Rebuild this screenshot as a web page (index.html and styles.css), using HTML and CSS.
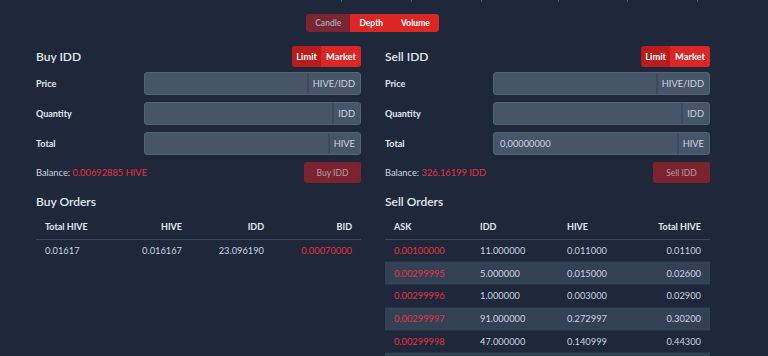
FILE: index.html
```html
<!DOCTYPE html>
<html lang="en">
<head>
    <meta charset="UTF-8">
    <meta name="viewport" content="width=device-width, initial-scale=1.0">
    <title>IDD Market</title>
    <link rel="stylesheet" href="styles.css">
</head>
<body>
    <!-- bottom edge of the chart axis above -->
    <svg class="axis-ticks" width="768" height="2" viewBox="0 0 768 2">
        <g stroke="#4b5768" stroke-width="1">
            <line x1="341.5" y1="0" x2="341.5" y2="2"/>
            <line x1="411.5" y1="0" x2="411.5" y2="2"/>
            <line x1="481.5" y1="0" x2="481.5" y2="2"/>
            <line x1="558.5" y1="0" x2="558.5" y2="2"/>
            <line x1="627.5" y1="0" x2="627.5" y2="2"/>
            <line x1="697.5" y1="0" x2="697.5" y2="2"/>
        </g>
    </svg>

    <div class="page">
        <div class="chart-tabs">
            <div class="btn-group">
                <button class="seg seg-muted">Candle</button>
                <button class="seg">Depth</button>
                <button class="seg">Volume</button>
            </div>
        </div>

        <div class="row">
            <div class="col">
                <div class="panel-head">
                    <h2>Buy IDD</h2>
                    <div class="btn-group btn-group-sm">
                        <button class="seg seg-active">Limit</button>
                        <button class="seg">Market</button>
                    </div>
                </div>

                <div class="form-row">
                    <label>Price</label>
                    <div class="input-group">
                        <input type="text">
                        <span class="addon">HIVE/IDD</span>
                    </div>
                </div>
                <div class="form-row">
                    <label>Quantity</label>
                    <div class="input-group">
                        <input type="text">
                        <span class="addon">IDD</span>
                    </div>
                </div>
                <div class="form-row">
                    <label>Total</label>
                    <div class="input-group">
                        <input type="text">
                        <span class="addon">HIVE</span>
                    </div>
                </div>

                <div class="balance-row">
                    <span>Balance: <span class="red">0.00692885 HIVE</span></span>
                    <button class="submit-btn" disabled>Buy IDD</button>
                </div>

                <h2 class="orders-title">Buy Orders</h2>
                <table class="orders buy-orders">
                    <colgroup>
                        <col style="width: 77px">
                        <col style="width: 78px">
                        <col style="width: 82px">
                        <col style="width: 88px">
                    </colgroup>
                    <thead>
                        <tr>
                            <th>Total HIVE</th>
                            <th class="num">HIVE</th>
                            <th class="num">IDD</th>
                            <th class="num">BID</th>
                        </tr>
                    </thead>
                    <tbody>
                        <tr>
                            <td>0.01617</td>
                            <td class="num">0.016167</td>
                            <td class="num">23.096190</td>
                            <td class="num red">0.00070000</td>
                        </tr>
                    </tbody>
                </table>
            </div>

            <div class="col">
                <div class="panel-head">
                    <h2>Sell IDD</h2>
                    <div class="btn-group btn-group-sm">
                        <button class="seg seg-active">Limit</button>
                        <button class="seg">Market</button>
                    </div>
                </div>

                <div class="form-row">
                    <label>Price</label>
                    <div class="input-group">
                        <input type="text">
                        <span class="addon">HIVE/IDD</span>
                    </div>
                </div>
                <div class="form-row">
                    <label>Quantity</label>
                    <div class="input-group">
                        <input type="text">
                        <span class="addon">IDD</span>
                    </div>
                </div>
                <div class="form-row">
                    <label>Total</label>
                    <div class="input-group">
                        <input type="text" value="0,00000000">
                        <span class="addon">HIVE</span>
                    </div>
                </div>

                <div class="balance-row">
                    <span>Balance: <span class="red">326.16199 IDD</span></span>
                    <button class="submit-btn" disabled>Sell IDD</button>
                </div>

                <h2 class="orders-title">Sell Orders</h2>
                <table class="orders sell-orders">
                    <colgroup>
                        <col style="width: 86px">
                        <col style="width: 87px">
                        <col style="width: 76px">
                        <col style="width: 76px">
                    </colgroup>
                    <thead>
                        <tr>
                            <th>ASK</th>
                            <th>IDD</th>
                            <th>HIVE</th>
                            <th class="num">Total HIVE</th>
                        </tr>
                    </thead>
                    <tbody>
                        <tr>
                            <td class="red">0.00100000</td>
                            <td>11.000000</td>
                            <td>0.011000</td>
                            <td class="num">0.01100</td>
                        </tr>
                        <tr>
                            <td class="red">0.00299995</td>
                            <td>5.000000</td>
                            <td>0.015000</td>
                            <td class="num">0.02600</td>
                        </tr>
                        <tr>
                            <td class="red">0.00299996</td>
                            <td>1.000000</td>
                            <td>0.003000</td>
                            <td class="num">0.02900</td>
                        </tr>
                        <tr>
                            <td class="red">0.00299997</td>
                            <td>91.000000</td>
                            <td>0.272997</td>
                            <td class="num">0.30200</td>
                        </tr>
                        <tr>
                            <td class="red">0.00299998</td>
                            <td>47.000000</td>
                            <td>0.140999</td>
                            <td class="num">0.44300</td>
                        </tr>
                        <tr>
                            <td></td>
                            <td></td>
                            <td></td>
                            <td></td>
                        </tr>
                    </tbody>
                </table>
            </div>
        </div>
    </div>
</body>
</html>
```

FILE: styles.css
```css
* {
    box-sizing: border-box;
    margin: 0;
    padding: 0;
}

body {
    font-family: Lato, "Noto Sans", sans-serif;
    font-size: 9.3px;
    color: #cbd5e1;
    background-color: #1e283a;
    overflow: hidden;
    height: 356px;
}

.axis-ticks {
    display: block;
}

.page {
    width: 697px;
    margin-left: 24px;
}

.chart-tabs {
    display: flex;
    justify-content: center;
    margin-top: 12px;
}

.btn-group {
    display: flex;
    border-radius: 3px;
    overflow: hidden;
}

.seg {
    font-family: inherit;
    font-weight: 700;
    font-size: 8.5px;
    height: 18px;
    padding: 0 9px;
    border: none;
    background: #dc2626;
    color: #ffffff;
    cursor: pointer;
}

.seg-muted {
    background: #7b2532;
    color: #9ca3af;
}

.btn-group-sm .seg {
    height: 21px;
    font-size: 9.3px;
    padding: 0 4px;
}

.btn-group-sm .seg + .seg {
    padding: 0 5px;
}

.seg-active {
    background: #b91c1c;
}

.row {
    display: grid;
    grid-template-columns: 1fr 1fr;
    margin-top: 14px;
}

.col {
    padding: 0 12px;
}

.panel-head {
    display: flex;
    justify-content: space-between;
    align-items: center;
    height: 21px;
}

h2 {
    font-size: 12px;
    font-weight: 600;
    color: #e2e8f0;
}

.form-row {
    display: flex;
    align-items: center;
    margin-top: 5px;
}

.form-row + .form-row {
    margin-top: 7px;
}

.form-row label {
    width: 108px;
    font-weight: 700;
    font-size: 9px;
    color: #e2e8f0;
}

.input-group {
    flex: 1;
    display: flex;
    height: 23px;
    border: 1px solid #556275;
    border-radius: 3px;
    background: #475569;
    overflow: hidden;
}

.input-group input {
    flex: 1;
    min-width: 0;
    border: none;
    outline: none;
    background: transparent;
    font-family: inherit;
    font-size: 9.3px;
    color: #cbd5e1;
    padding: 0 6px;
}

.addon {
    display: flex;
    align-items: center;
    padding: 0 5px 0 4px;
    border-left: 2px solid #3d4a5d;
    font-size: 9.3px;
    color: #cbd5e1;
}

.balance-row {
    display: flex;
    justify-content: space-between;
    align-items: center;
    margin-top: 7px;
}

.red {
    color: #e5323f;
}

.submit-btn {
    height: 21px;
    width: 57px;
    border: none;
    border-radius: 3px;
    background: #7b2430;
    color: #b79ba3;
    font-family: inherit;
    font-size: 8.5px;
}

.orders-title {
    margin-top: 10px;
    line-height: 18px;
}

.orders {
    width: 100%;
    table-layout: fixed;
    border-collapse: collapse;
    margin-top: 4px;
}

.orders th {
    height: 24px;
    padding: 0 9px;
    text-align: left;
    font-weight: 700;
    font-size: 9px;
    color: #e2e8f0;
    border-bottom: 1px solid #3a4658;
}

.orders td {
    height: 22.8px;
    padding: 0 9px;
    white-space: nowrap;
}

.sell-orders td {
    border-bottom: 1px solid #283346;
}

.orders .num {
    text-align: right;
}

.sell-orders tbody tr:nth-child(even) td {
    background: #334155;
}
```
